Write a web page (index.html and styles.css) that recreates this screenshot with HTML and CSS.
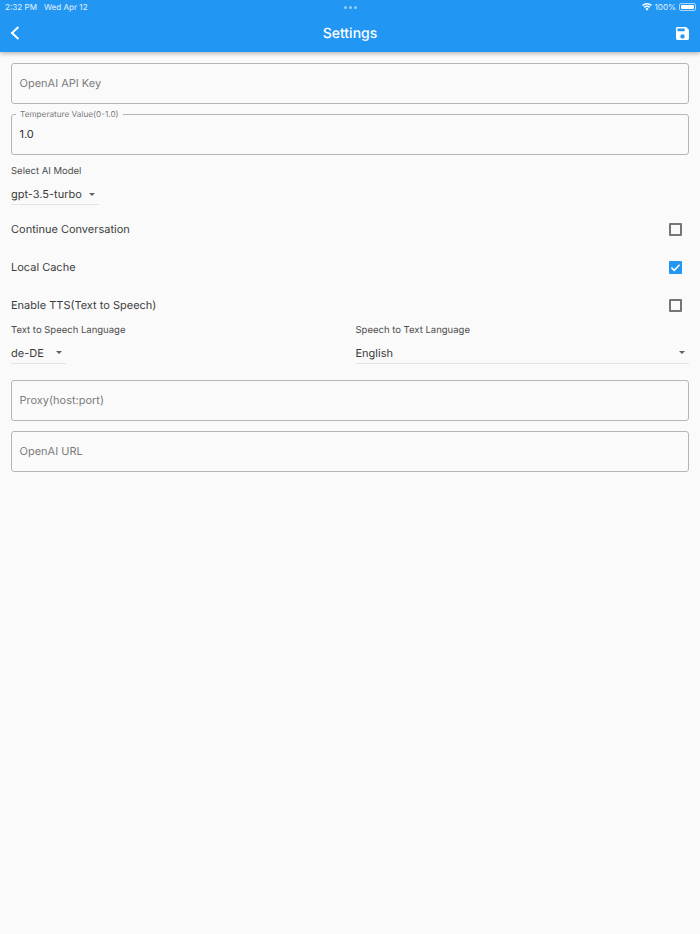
FILE: index.html
```html
<!DOCTYPE html>
<html lang="en">
<head>
<meta charset="utf-8">
<title>Settings</title>
<link rel="stylesheet" href="styles.css">
</head>
<body>
<header class="appbar">
  <div class="status">
    <div class="status-left"><span>2:32 PM</span><span>Wed Apr 12</span></div>
    <div class="dots"><i></i><i></i><i></i></div>
    <div class="status-right">
      <svg class="wifi" width="10" height="8" viewBox="0 0 20 15" aria-hidden="true"><path d="M10 15 6.8 11.2a4.6 4.6 0 0 1 6.4 0Z M5.3 9.5 3.4 7.2a10 10 0 0 1 13.2 0L14.7 9.5a7 7 0 0 0-9.4 0Z M2 5.6 0 3.4a15 15 0 0 1 20 0L18 5.6a12 12 0 0 0-16 0Z" fill="#fff"/></svg>
      <span>100%</span>
      <span class="battery"><b></b></span>
    </div>
  </div>
  <div class="toolbar">
    <svg class="back" width="12" height="16" viewBox="0 0 12 16" aria-hidden="true"><path d="M8.4 2 2 8l6.4 6" fill="none" stroke="#fff" stroke-width="2"/></svg>
    <h1>Settings</h1>
    <svg class="save" width="13" height="13" viewBox="3 3 18 18" aria-hidden="true"><path fill="#fff" d="M17 3H5a2 2 0 0 0-2 2v14a2 2 0 0 0 2 2h14a2 2 0 0 0 2-2V7l-4-4Zm-5 16a3 3 0 1 1 0-6 3 3 0 0 1 0 6Zm3-10H5V5h10v4Z"/></svg>
  </div>
</header>
<main class="content">
  <div class="field first"><span class="placeholder">OpenAI API Key</span></div>
  <div class="field float">
    <span class="legend">Temperature Value(0-1.0)</span>
    <span class="value">1.0</span>
  </div>
  <div class="label model-label">Select AI Model</div>
  <div class="select model"><span>gpt-3.5-turbo</span><i class="caret"></i></div>
  <div class="check-row top"><span>Continue Conversation</span><span class="box"></span></div>
  <div class="check-row"><span>Local Cache</span>
    <span class="box on"><svg width="13" height="13" viewBox="0 0 14 14" aria-hidden="true"><path d="M2.6 7.2 5.6 10l5.8-6" fill="none" stroke="#fff" stroke-width="1.7"/></svg></span>
  </div>
  <div class="check-row"><span>Enable TTS(Text to Speech)</span><span class="box"></span></div>
  <div class="lang-grid">
    <div>
      <div class="label">Text to Speech Language</div>
      <div class="select tts"><span>de-DE</span><i class="caret"></i></div>
    </div>
    <div>
      <div class="label">Speech to Text Language</div>
      <div class="select stt"><span>English</span><i class="caret"></i></div>
    </div>
  </div>
  <div class="field proxy"><span class="placeholder">Proxy(host:port)</span></div>
  <div class="field url"><span class="placeholder">OpenAI URL</span></div>
</main>
</body>
</html>
```
FILE: styles.css
```css
* { box-sizing: border-box; }
html, body { margin: 0; height: 100%; }
body {
  background: #fafafa;
  color: #3d3d3d;
  font-family: Inter, "Noto Sans", sans-serif;
  font-size: 11px;
  text-rendering: geometricPrecision;
  overflow: hidden;
}
.appbar {
  height: 52px;
  background: #2196f3;
  color: #fff;
  box-shadow: 0 2px 4px rgba(0, 0, 0, .25);
}
.status {
  height: 14px;
  padding: 0 4px 0 5px;
  display: grid;
  grid-template-columns: 1fr auto 1fr;
  align-items: center;
  font-size: 8.1px;
  color: #e3f2fd;
}
.status-left { display: flex; gap: 7px; }
.status-right { display: flex; justify-content: flex-end; align-items: center; gap: 3px; }
.dots { display: flex; gap: 2px; }
.dots i { width: 3px; height: 3px; border-radius: 50%; background: #90d0fa; }
.battery {
  width: 17px;
  height: 8px;
  border: 1px solid #a9d6fa;
  border-radius: 2px;
  padding: 1px;
  display: flex;
}
.battery b { flex: 1; background: #fff; border-radius: 1px; }
.toolbar {
  height: 38px;
  padding: 0 11px 0 10px;
  display: flex;
  align-items: center;
  justify-content: space-between;
  position: relative;
}
.toolbar h1 {
  position: absolute;
  left: 0;
  right: 0;
  margin: 0;
  text-align: center;
  font-size: 14px;
  font-weight: 500;
}
.back, .save { position: relative; }
.content { padding: 11px 11px 0; }
.field {
  height: 41px;
  border: 1px solid #b5b5b5;
  border-radius: 3px;
  padding: 0 7.5px 1px;
  display: flex;
  align-items: center;
  font-size: 11px;
  position: relative;
}
.float { margin-top: 10px; }
.placeholder { color: #7b7b7b; }
.value { color: #2c2c2c; }
.legend {
  position: absolute;
  left: 4px;
  top: -6px;
  padding: 0 4px;
  background: #fafafa;
  font-size: 8.2px;
  line-height: 11px;
  color: #7b7b7b;
}
.label { font-size: 9.5px; line-height: 12px; color: #4d4d4d; }
.model-label { margin-top: 11px; }
.select {
  height: 23px;
  padding-top: 2px;
  display: flex;
  align-items: center;
  justify-content: space-between;
  border-bottom: 1px solid #e4e4e4;
  font-size: 11px;
  color: #3a3a3a;
}
.model { width: 88px; padding-right: 4px; margin-top: 4px; }
.tts { width: 55px; padding-right: 4px; }
.stt { padding-right: 4px; }
.caret {
  width: 0;
  height: 0;
  border: 3.6px solid transparent;
  border-top: 3.6px solid #616161;
  border-bottom: 0;
}
.check-row {
  height: 38.2px;
  padding-right: 7px;
  display: flex;
  align-items: center;
  justify-content: space-between;
  font-size: 11px;
  color: #3d3d3d;
}
.check-row.top { margin-top: 5px; }
.box {
  width: 13px;
  height: 13px;
  border: 2px solid #757575;
  border-radius: 1px;
  display: flex;
  align-items: center;
  justify-content: center;
}
.box.on { border: 0; background: #2196f3; }
.lang-grid {
  display: grid;
  grid-template-columns: 1fr 1fr;
  gap: 11px;
}
.lang-grid .select { margin-top: 4px; }
.proxy { margin-top: 16px; }
.url { margin-top: 10px; }
```
